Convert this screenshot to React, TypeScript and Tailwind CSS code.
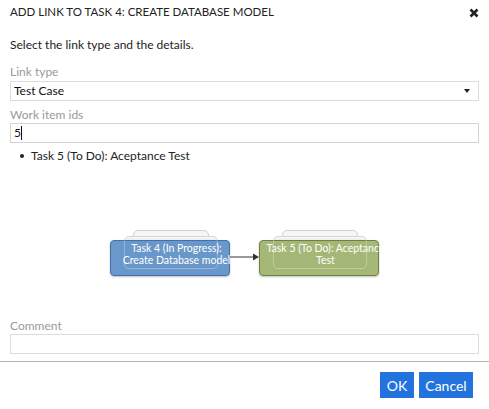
import React from "react";

const font = { fontFamily: 'Lato, "Open Sans", "Noto Sans", sans-serif' };

const Node: React.FC<{
  left: number;
  lines: string[];
  tone: "blue" | "green";
}> = ({ left, lines, tone }) => {
  const front =
    tone === "blue"
      ? "bg-[#5b8dc4]/90 border-[#3f72ad]"
      : "bg-[#9cb068]/90 border-[#6f8140]";
  return (
    <div className="absolute top-[66px]" style={{ left }}>
      <div className="absolute left-[23px] top-0 w-[76px] h-[30px] rounded-[5px] border border-[#d0d0d0] bg-[#f6f6f6]" />
      <div className="absolute left-[14px] top-[6px] w-[94px] h-[32px] rounded-[5px] border border-[#d6d6d6] bg-[#f2f2f2]" />
      <div
        className={`absolute left-0 top-[10px] w-[120px] h-[36px] rounded-[4px] border ${front} shadow-[0_1px_2px_rgba(0,0,0,0.25)]`}
      >
        <div className="absolute left-[13px] w-[94px] top-[-4px] h-[32px] rounded-[5px] border border-white/30" />
        <div className="relative flex flex-col items-center h-full pl-[13px] pt-[1px] text-[10.5px] leading-[12px] text-white whitespace-nowrap">
          {lines.map((l) => (
            <span key={l}>{l}</span>
          ))}
        </div>
      </div>
    </div>
  );
};

export default function App() {
  return (
    <div className="w-[489px] h-[409px] bg-white text-[#222] text-[12px]" style={font}>
      <div className="h-[24px] px-[10px] flex items-center justify-between">
        <span className="text-[11.5px] text-[#222]">ADD LINK TO TASK 4: CREATE DATABASE MODEL</span>
        <svg width="10" height="10" viewBox="0 0 10 10" className="mt-[2px]">
          <path d="M1.5 1.5 L8.5 8.5 M8.5 1.5 L1.5 8.5" stroke="#222" strokeWidth="2.6" />
        </svg>
      </div>

      <div className="px-[10px]">
        <div className="mt-[13px] h-[16px] leading-[16px] text-[12px]">Select the link type and the details.</div>

        <div className="mt-[11px] h-[16px] leading-[16px] text-[#9a9a9a] text-[12px]">Link type</div>
        <div className="mt-[1px] h-[20px] border border-[#dcdcdc] flex items-center justify-between pl-[3px] pr-[8px]">
          <span className="text-[12px] text-[#111]">Test Case</span>
          <svg width="6" height="4" viewBox="0 0 6 4">
            <path d="M0 0 H6 L3 4 Z" fill="#222" />
          </svg>
        </div>

        <div className="mt-[6px] h-[16px] leading-[16px] text-[#9a9a9a] text-[12px]">Work item ids</div>
        <div className="h-[20px] border border-[#d4d4d4] flex items-center pl-[3px]">
          <span className="text-[12px] text-[#111]">5</span>
          <span className="w-px h-[14px] bg-[#111]" />
        </div>

        <ul className="mt-[5px] h-[16px] flex items-center text-[12px]">
          <li className="flex items-center">
            <span className="ml-[10px] w-[4px] h-[4px] rounded-full bg-[#222]" />
            <span className="ml-[7px]">Task 5 (To Do): Aceptance Test</span>
          </li>
        </ul>
      </div>

      <div className="relative h-[154px]">
        <Node left={110} tone="blue" lines={["Task 4 (In Progress):", "Create Database model"]} />
        <Node left={259} tone="green" lines={["Task 5 (To Do): Aceptance", "Test"]} />
        <svg className="absolute left-[230px] top-[88px]" width="30" height="10" viewBox="0 0 30 10">
          <path d="M0 5 H24" stroke="#333" strokeWidth="1" />
          <path d="M23 1.5 L29 5 L23 8.5 Z" fill="#333" />
        </svg>
      </div>

      <div className="px-[10px]">
        <div className="h-[16px] leading-[16px] text-[#9a9a9a] text-[12px]">Comment</div>
        <div className="h-[20px] border border-[#dcdcdc]" />
      </div>

      <div className="mt-[7px] border-t border-[#b4b4b4] pt-[10px] pr-[16px] flex justify-end gap-[5px]">
        <button className="h-[26px] w-[34px] bg-[#2373de] text-white text-[14px]">OK</button>
        <button className="h-[26px] w-[54px] bg-[#2373de] text-white text-[14px]">Cancel</button>
      </div>
    </div>
  );
}
